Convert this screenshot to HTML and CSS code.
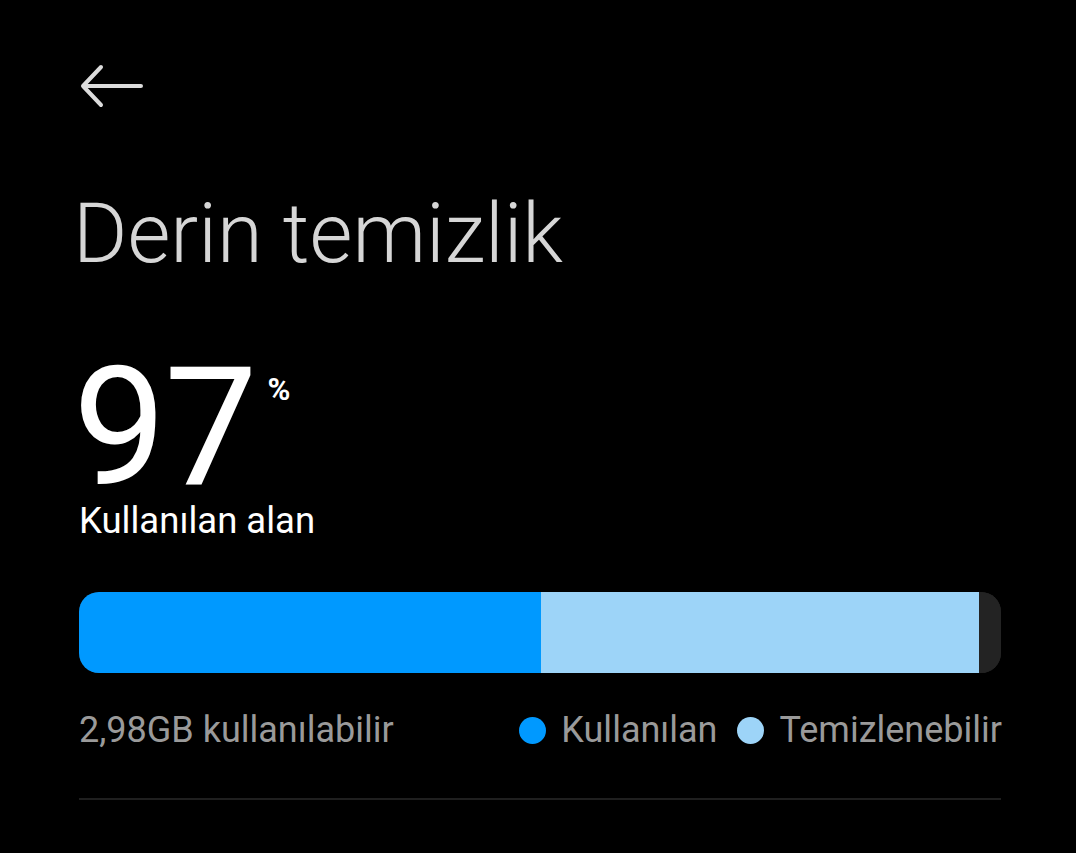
FILE: index.html
```html
<!DOCTYPE html>
<html lang="tr">
<head>
<meta charset="utf-8">
<title>Derin temizlik</title>
<link rel="stylesheet" href="styles.css">
</head>
<body>
<main class="page">
  <header class="topbar">
    <svg class="back" width="64" height="44" viewBox="0 0 64 44" aria-label="Geri">
      <path d="M3 22 H61 M21 3 L3 22 L21 41" fill="none" stroke="#dcdcdc" stroke-width="4" stroke-linecap="round" stroke-linejoin="round"/>
    </svg>
  </header>
  <h1 class="title">Derin temizlik</h1>
  <div class="usage">
    <span class="usage-num">97</span><span class="usage-pct">%</span>
  </div>
  <div class="usage-label">Kullanılan alan</div>
  <div class="bar">
    <div class="seg seg-used" style="flex-basis:462px"></div>
    <div class="seg seg-clean" style="flex-basis:438px"></div>
    <div class="seg seg-free"></div>
  </div>
  <div class="legend">
    <span class="avail">2,98GB kullanılabilir</span>
    <div class="keys">
      <span class="key"><span class="dot dot-used"></span>Kullanılan</span>
      <span class="key"><span class="dot dot-clean"></span>Temizlenebilir</span>
    </div>
  </div>
  <hr class="divider">
</main>
</body>
</html>
```

FILE: styles.css
```css
html, body {
  margin: 0;
  padding: 0;
  background: #000;
}
body {
  font-family: Roboto, "Noto Sans", "Liberation Sans", sans-serif;
  color: #fff;
}
.page {
  display: flex;
  flex-direction: column;
  padding: 64px 75px 0 79px;
  height: 853px;
  box-sizing: border-box;
}
.topbar {
  display: flex;
  height: 44px;
}
.back {
  display: block;
  margin-left: 1px;
}
.title {
  margin: 84px 0 0 -6px;
  font-size: 83px;
  line-height: 84px;
  font-weight: 300;
  color: #d6d6d6;
  letter-spacing: 0;
}
.usage {
  display: flex;
  align-items: flex-start;
  margin-top: 82px;
  height: 140px;
}
.usage-num {
  font-size: 166px;
  line-height: 140px;
  font-weight: 400;
  margin-left: -6px;
  letter-spacing: -2px;
}
.usage-pct {
  font-size: 31px;
  line-height: 32px;
  font-weight: 700;
  margin: 16px 0 0 12px;
}
.usage-label {
  margin-top: 5px;
  font-size: 36.5px;
  line-height: 36px;
  color: #fff;
}
.bar {
  display: flex;
  margin-top: 53px;
  height: 81px;
  border-radius: 20px;
  overflow: hidden;
  background: #232323;
}
.seg { flex-shrink: 0; }
.seg-used { background: #0099ff; }
.seg-clean { background: #9dd4f8; }
.seg-free { flex: 1; background: #232323; }
.legend {
  display: flex;
  justify-content: space-between;
  align-items: center;
  margin-top: 39px;
  font-size: 36px;
  line-height: 36px;
  color: #9a9a9a;
}
.keys {
  display: flex;
  gap: 20px;
  margin-right: -1px;
}
.key {
  display: flex;
  align-items: center;
  gap: 15px;
}
.dot {
  width: 27px;
  height: 27px;
  border-radius: 50%;
  display: block;
}
.dot-used { background: #0099ff; }
.dot-clean { background: #9dd4f8; }
.divider {
  margin: 50px 0 0;
  border: 0;
  height: 2px;
  background: #1f1f1f;
}
```
